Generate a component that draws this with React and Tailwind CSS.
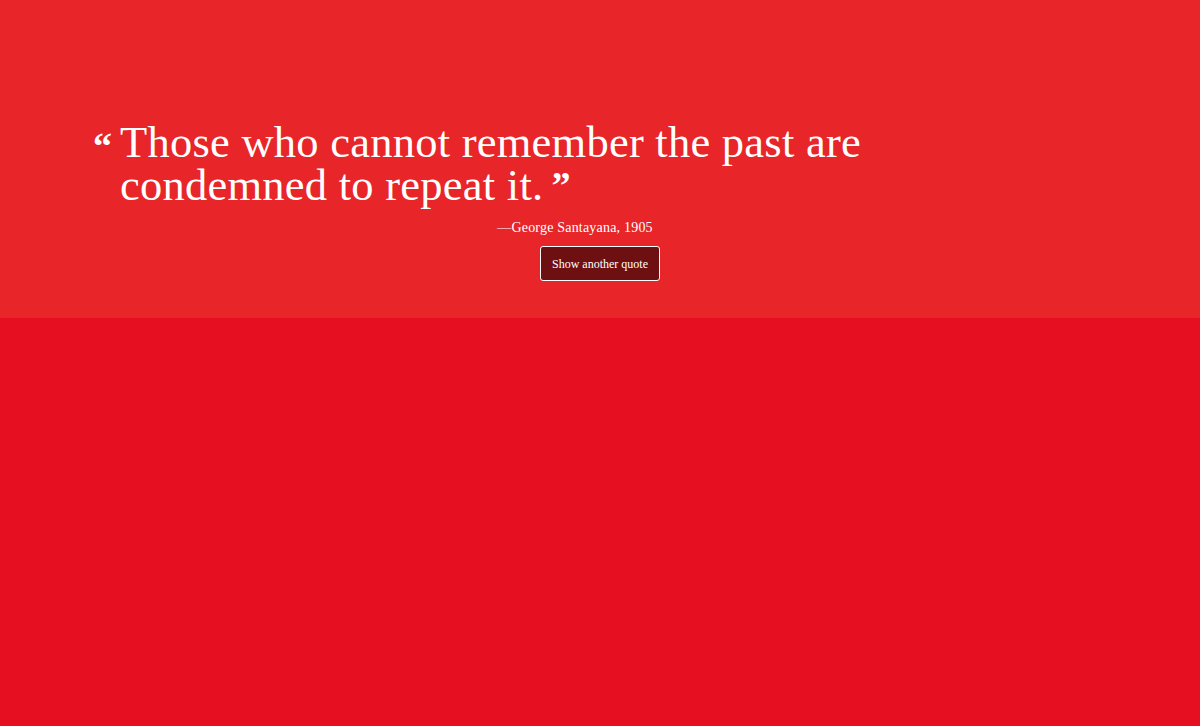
import React from 'react';

const serif = { fontFamily: '"Liberation Serif", "DejaVu Serif", serif' };

export default function App() {
  return (
    <div className="min-h-[726px] w-full bg-[#e60f21]" style={serif}>
      <section className="h-[318px] bg-[#e82528] pt-[121px] text-white">
        <div className="ml-[93px] w-[964px]">
          <blockquote className="flex items-start">
            <span className="mt-[6px] w-[27px] shrink-0 text-[38px] leading-[38px] font-bold">&ldquo;</span>
            <p className="text-[44.5px] leading-[43px] tracking-[0.25px]">
              Those who cannot remember the past are
              <br />
              condemned to repeat it.
              <span className="relative top-[2px] ml-[8px] inline-block align-top text-[38px] font-bold leading-[38px]">&rdquo;</span>
            </p>
          </blockquote>
          <p className="mt-[10px] text-center text-[14px] tracking-[0.2px]">&mdash;George Santayana, 1905</p>
        </div>
        <div className="mt-[8px] flex justify-center">
          <button className="h-[35px] w-[120px] rounded-[3px] border border-white bg-[#6e0f12] text-[12px] text-white">
            Show another quote
          </button>
        </div>
      </section>
    </div>
  );
}
